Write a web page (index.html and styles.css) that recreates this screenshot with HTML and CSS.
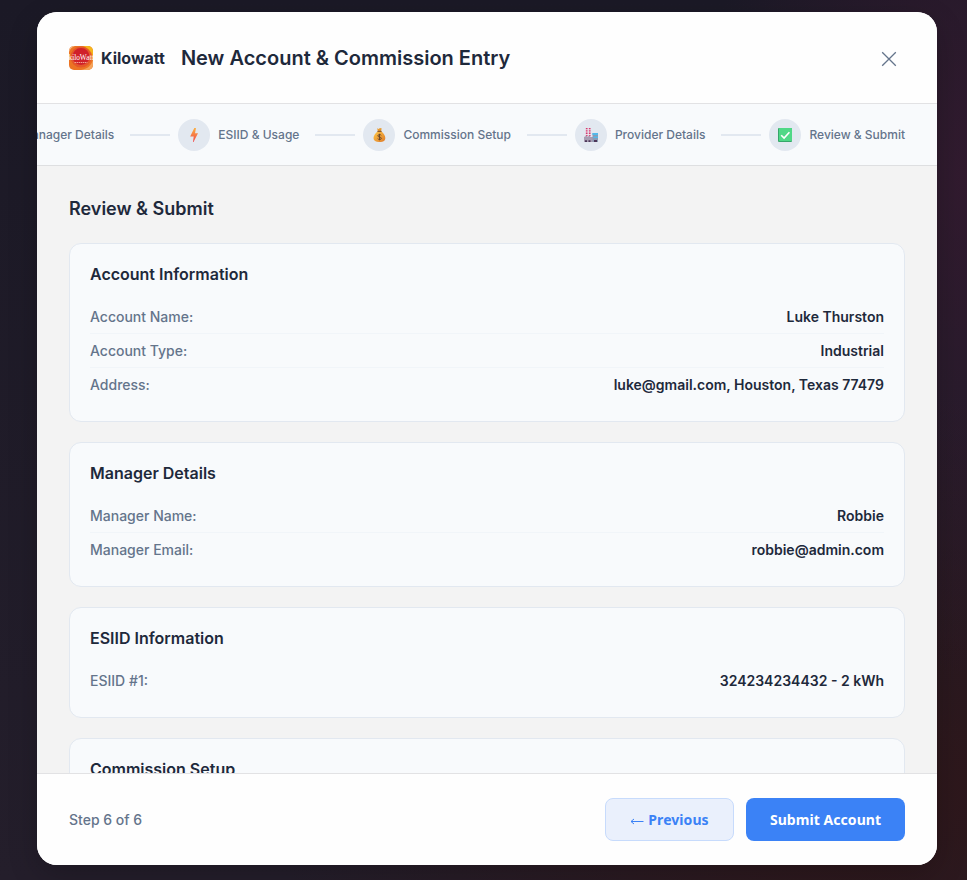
FILE: index.html
```html
<!DOCTYPE html>
<html lang="en">
<head>
<meta charset="utf-8">
<title>New Account &amp; Commission Entry</title>
<link rel="stylesheet" href="styles.css">
</head>
<body>
<div class="modal">
  <header class="header">
    <svg class="logo" viewBox="0 0 24 24">
      <defs><clipPath id="logo-clip"><rect width="24" height="24" rx="5"/></clipPath></defs>
      <g clip-path="url(#logo-clip)">
        <rect width="24" height="24" fill="#ec7424"/>
        <path d="M14 0h10v10C22 5 19 2 14 0z" fill="#f5b51c"/>
        <path d="M0 0h6C3 1 1 3 0 6z" fill="#f6b884"/>
        <path d="M24 14v10H12c6-1 10-4 12-10z" fill="#f5a45c"/>
        <circle cx="12" cy="11" r="10.5" fill="#e4572a"/>
        <circle cx="12" cy="10.500" r="8.500" fill="#d0202a"/>
        <text class="logo-name" x="12" y="14" text-anchor="middle" textLength="25" lengthAdjust="spacingAndGlyphs">kiloWatt</text>
        <path d="M5.500 16.500h13" stroke="#f0a090" stroke-width="1" stroke-dasharray="1.500 .6"/>
      </g>
    </svg>
    <span class="brand">Kilowatt</span>
    <h1 class="title">New Account &amp; Commission Entry</h1>
    <svg class="close" viewBox="0 0 16 16"><path d="M1.200 1.200l13.600 13.600M14.800 1.200L1.200 14.800"/></svg>
  </header>

  <nav class="steps">
    <div class="step"><span class="label">Manager Details</span></div>
    <span class="line"></span>
    <div class="step">
      <span class="dot"><svg viewBox="0 0 16 16">
        <defs><linearGradient id="bolt" x2="0" y2="1"><stop stop-color="#fbb040"/><stop offset="1" stop-color="#f0484e"/></linearGradient></defs>
        <path d="M8.300 1h1.700L9 6.200h3L7.500 15H7l.7-5.600H4.200z" fill="url(#bolt)"/></svg></span>
      <span class="label">ESIID &amp; Usage</span>
    </div>
    <span class="line"></span>
    <div class="step">
      <span class="dot"><svg viewBox="0 0 16 16">
        <defs><linearGradient id="bag" x2="1" y2="1"><stop stop-color="#ffc845"/><stop offset="1" stop-color="#dd7a2b"/></linearGradient></defs>
        <path d="M6 1.300l1.500.6L9 1.100l1.800.4-1 2.700H7z" fill="#e89b30"/>
        <path d="M6.700 4.500h3.600C12.500 6 14.300 8.500 14.300 11c0 2.700-1.800 4-5.800 4s-6-1.300-6-4c0-2.500 2-5 4.200-6.500z" fill="url(#bag)"/>
        <path d="M6.400 4.400h4.200" stroke="#8f5a28" stroke-width="1.100"/>
        <path d="M10.300 8.400C9.700 7.200 6.700 7.300 6.800 8.900c.1 1.500 3.500.8 3.600 2.300.1 1.600-3 1.700-3.700.4M8.500 6.800v6.500" fill="none" stroke="#63442c" stroke-width=".9"/></svg></span>
      <span class="label">Commission Setup</span>
    </div>
    <span class="line"></span>
    <div class="step">
      <span class="dot"><svg viewBox="0 0 16 16">
        <path d="M3.700 1v9M6.700 1v9" stroke="#f1d4e0" stroke-width="1.700"/>
        <path d="M3.700 1v9M6.700 1v9" stroke="#d23b70" stroke-width="1.700" stroke-dasharray="1.300 1"/>
        <path d="M1 10l3-1.500V10l3-1.500V10h3v5H1z" fill="#a99db2"/>
        <path d="M9.500 6H15v9H9.500z" fill="#8b9cb5"/>
        <path d="M9.500 6H15v2H9.500zM10.500 9.500H15v1.500h-4.500z" fill="#52b9eb"/>
        <path d="M2 13.300h2V15H2zM5.500 13.300h2V15h-2zM11 13h3v2h-3z" fill="#4c3658"/></svg></span>
      <span class="label">Provider Details</span>
    </div>
    <span class="line"></span>
    <div class="step">
      <span class="dot"><svg viewBox="0 0 16 16">
        <rect x="1" y="1" width="14" height="14" rx="1" fill="#37a66b"/>
        <rect x="2" y="1" width="13" height="13" rx=".8" fill="#50d887"/>
        <path d="M4.200 8.200l2.900 2.900 5.300-5.900" fill="none" stroke="#fff" stroke-width="1.600"/></svg></span>
      <span class="label">Review &amp; Submit</span>
    </div>
  </nav>

  <main class="content">
    <h2 class="heading">Review &amp; Submit</h2>
    <section class="card">
      <h3>Account Information</h3>
      <div class="row"><span>Account Name:</span><b>Luke Thurston</b></div>
      <div class="row"><span>Account Type:</span><b>Industrial</b></div>
      <div class="row"><span>Address:</span><b>luke@gmail.com, Houston, Texas 77479</b></div>
    </section>
    <section class="card">
      <h3>Manager Details</h3>
      <div class="row"><span>Manager Name:</span><b>Robbie</b></div>
      <div class="row"><span>Manager Email:</span><b>robbie@admin.com</b></div>
    </section>
    <section class="card">
      <h3>ESIID Information</h3>
      <div class="row"><span>ESIID #1:</span><b>324234234432 - 2 kWh</b></div>
    </section>
    <section class="card">
      <h3>Commission Setup</h3>
    </section>
  </main>

  <footer class="footer">
    <span class="progress">Step 6 of 6</span>
    <button class="btn secondary"><svg class="arrow" viewBox="0 0 14 10"><path d="M13.500 5.500H1M4 3L1 5.500 4 8"/></svg>Previous</button>
    <button class="btn primary">Submit Account</button>
  </footer>
</div>
</body>
</html>
```
FILE: styles.css
```css
* { box-sizing: border-box; }
body {
  margin: 0;
  height: 880px;
  overflow: hidden;
  padding: 12px 30px 15px 37px;
  font-family: Inter, sans-serif;
  color: #1e293b;
  background:
    radial-gradient(ellipse 260px 500px at 100% 20%, rgba(58, 27, 50, .7), transparent),
    radial-gradient(ellipse 600px 400px at 90% 90%, rgba(48, 22, 24, .9), transparent),
    linear-gradient(180deg, #1b1926, #241e2b);
}
.modal {
  width: 900px;
  height: 853px;
  display: flex;
  flex-direction: column;
  border-radius: 20px;
  overflow: hidden;
  background: #f3f3f3;
  box-shadow: 0 10px 30px rgba(0, 0, 0, .2);
}
.header {
  height: 92px;
  flex: none;
  display: flex;
  align-items: center;
  padding: 0 40px 0 32px;
  background: #fefefe;
  border-bottom: 1px solid #e2e2e4;
}
.logo { width: 24px; height: 24px; }
.logo-name { font: 8px "Liberation Serif", serif; fill: #fff; }
.brand { margin-left: 8px; font-size: 16px; font-weight: 700; }
.title { margin: 0 auto 0 16px; font-size: 20px; font-weight: 600; }
.close { width: 16px; height: 16px; fill: none; stroke: #64748b; stroke-width: 1.3; margin-top: 2px; }
.steps {
  height: 62px;
  flex: none;
  display: flex;
  align-items: center;
  justify-content: flex-end;
  padding: 0 32px;
  overflow: hidden;
  background: #f8fafc;
  border-bottom: 1px solid #dedfe1;
}
.step { display: flex; align-items: center; gap: 8px; flex: none; }
.dot {
  width: 32px;
  height: 32px;
  display: grid;
  place-items: center;
  border-radius: 50%;
  background: #e2e8f0;
}
.dot svg { width: 16px; height: 16px; }
.label { font-size: 12px; font-weight: 500; color: #64748b; white-space: nowrap; }
.line { width: 40px; height: 2px; flex: none; margin: 0 8px 0 16px; background: #e2e8f0; }
.content { flex: 1; min-height: 0; overflow: hidden; padding: 32px; }
.heading { margin: 0 0 23px; font-size: 18px; line-height: 22px; font-weight: 600; }
.card {
  padding: 20px;
  margin-bottom: 20px;
  border: 1px solid #e2e8f0;
  border-radius: 12px;
  background: #f8fafc;
}
.card h3 { margin: 0 0 16px; font-size: 16px; line-height: 20px; font-weight: 600; }
.row {
  display: flex;
  justify-content: space-between;
  height: 34px;
  padding: 8px 0;
  font-size: 14px;
  line-height: 17px;
  border-bottom: 1px solid #f1f5f9;
}
.row:last-child { height: 33px; border-bottom: 0; }
.row span { font-weight: 500; color: #64748b; }
.row b { font-weight: 600; }
.footer {
  height: 92px;
  flex: none;
  display: flex;
  align-items: center;
  gap: 12px;
  padding: 0 32px;
  background: #fefefe;
  border-top: 1px solid #e2e2e4;
}
.progress { margin-right: auto; font-size: 14px; font-weight: 500; color: #64748b; }
.btn {
  height: 43px;
  display: flex;
  align-items: center;
  justify-content: center;
  padding: 0;
  border: 0;
  border-radius: 8px;
  font: 700 14px "Noto Sans", sans-serif;
  letter-spacing: .06px;
}
.secondary { width: 129px; gap: 4px; color: #3b82f6; background: #eaf0fc; border: 1px solid #c7dbfc; }
.primary { width: 159px; color: #fff; background: #3b82f6; }
.arrow { width: 14px; height: 10px; fill: none; stroke: currentColor; stroke-width: 1; margin-top: 2px; }
```
